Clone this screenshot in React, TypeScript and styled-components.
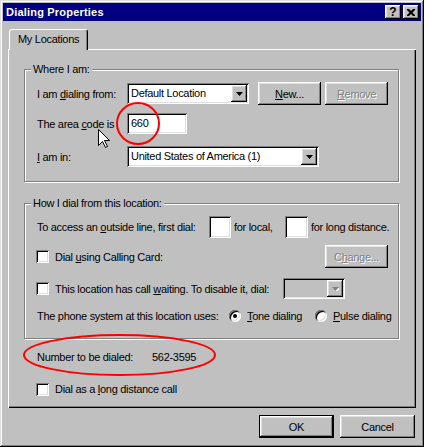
import styled, { createGlobalStyle } from "styled-components";

const GlobalStyle = createGlobalStyle`
  html, body {
    margin: 0;
    padding: 0;
    background: #c0c0c0;
  }
  body {
    font-family: "Liberation Sans", Arial, sans-serif;
    font-size: 11px;
    color: #000;
  }
`;

const raised =
  "box-shadow: inset -1px -1px #000, inset 1px 1px #fff, inset -2px -2px #808080, inset 2px 2px #dfdfdf;";
const sunken =
  "box-shadow: inset 1px 1px #808080, inset -1px -1px #fff, inset 2px 2px #000, inset -2px -2px #dfdfdf;";

const Window = styled.div`
  position: relative;
  width: 424px;
  height: 447px;
  box-sizing: border-box;
  padding: 3px;
  background: #c0c0c0;
  box-shadow: inset -1px -1px #000, inset 1px 1px #dfdfdf,
    inset -2px -2px #808080, inset 2px 2px #fff;
  display: flex;
  flex-direction: column;
  letter-spacing: -0.3px;
`;

const TitleBar = styled.div`
  height: 18px;
  background: #000080;
  display: flex;
  align-items: center;
  padding: 0 2px 0 3px;
`;

const TitleText = styled.div`
  flex: 1;
  color: #fff;
  font-weight: bold;
  letter-spacing: 0.2px;
`;

const TitleButtons = styled.div`
  display: flex;
  gap: 2px;
`;

const TitleButton = styled.div`
  width: 16px;
  height: 14px;
  background: #c0c0c0;
  ${raised}
  display: flex;
  align-items: center;
  justify-content: center;
  font-weight: bold;
  font-size: 12px;
  letter-spacing: 0;
  line-height: 14px;
`;

const Body = styled.div`
  padding: 8px 0 0 5px;
  display: flex;
  flex-direction: column;
`;

const TabStrip = styled.div`
  display: flex;
  height: 20px;
  padding-left: 1px;
`;

const Tab = styled.div`
  position: relative;
  z-index: 1;
  width: 79px;
  height: 21px;
  box-sizing: border-box;
  background: #c0c0c0;
  border-top: 1px solid #fff;
  border-left: 1px solid #fff;
  border-right: 1px solid #000;
  border-radius: 3px 3px 0 0;
  box-shadow: inset -1px 0 #808080;
  padding-left: 8px;
  line-height: 19px;
`;

const Panel = styled.div`
  width: 408px;
  height: 359px;
  box-sizing: border-box;
  padding: 20px 16px 0;
  box-shadow: inset 1px 1px #fff, inset -1px -1px #000, inset -2px -2px #808080;
  display: flex;
  flex-direction: column;
`;

const GroupBox = styled.div<{ $mt?: number }>`
  position: relative;
  margin: ${(p) => p.$mt ?? 0}px 1px 0 0;
  border: 1px solid #808080;
  box-shadow: 1px 1px 0 #fff, inset 1px 1px 0 #fff;
  padding: 12px 10px 14px 12px;
  display: flex;
  flex-direction: column;
`;

const Legend = styled.span`
  position: absolute;
  top: -7px;
  left: 6px;
  padding: 0 2px;
  background: #c0c0c0;
  line-height: 13px;
`;

const Row = styled.div<{ $h: number; $mt?: number }>`
  display: flex;
  align-items: center;
  height: ${(p) => p.$h}px;
  margin-top: ${(p) => p.$mt ?? 0}px;
`;

const Label = styled.span<{ $w?: number; $pl?: number }>`
  flex: none;
  width: ${(p) => (p.$w ? `${p.$w}px` : "auto")};
  padding-left: ${(p) => p.$pl ?? 0}px;
  box-sizing: border-box;
  white-space: nowrap;
`;

const Combo = styled.div<{ $w: number; $disabled?: boolean }>`
  flex: none;
  width: ${(p) => p.$w}px;
  height: 21px;
  box-sizing: border-box;
  padding: 2px;
  display: flex;
  background: ${(p) => (p.$disabled ? "#c0c0c0" : "#fff")};
  ${sunken}
`;

const ComboText = styled.span`
  flex: 1;
  padding-left: 2px;
  line-height: 17px;
  white-space: nowrap;
  overflow: hidden;
`;

const ComboArrow = styled.span`
  width: 16px;
  height: 17px;
  box-sizing: border-box;
  background: #c0c0c0;
  ${raised}
  display: flex;
  align-items: center;
  justify-content: center;
`;

const TextBox = styled.div<{ $w: number; $h?: number }>`
  flex: none;
  width: ${(p) => p.$w}px;
  height: ${(p) => p.$h ?? 21}px;
  box-sizing: border-box;
  background: #fff;
  ${sunken}
  padding-left: 4px;
  line-height: ${(p) => p.$h ?? 21}px;
`;

const Button = styled.div<{ $w: number; $disabled?: boolean; $default?: boolean; $ml?: number }>`
  flex: none;
  width: ${(p) => p.$w}px;
  height: 23px;
  box-sizing: border-box;
  margin-left: ${(p) => (p.$ml === undefined ? "0" : p.$ml < 0 ? "auto" : `${p.$ml}px`)};
  background: #c0c0c0;
  ${(p) =>
    p.$default
      ? "box-shadow: inset 0 0 0 1px #000, inset -2px -2px #000, inset 2px 2px #fff, inset -3px -3px #808080, inset 3px 3px #dfdfdf;"
      : raised}
  display: flex;
  align-items: center;
  justify-content: center;
  color: ${(p) => (p.$disabled ? "#808080" : "#000")};
  text-shadow: ${(p) => (p.$disabled ? "1px 1px 0 #fff" : "none")};
`;

const Check = styled.span`
  flex: none;
  width: 13px;
  height: 13px;
  box-sizing: border-box;
  background: #fff;
  ${sunken}
  margin: 0 6px 0 -1px;
`;

const Radio = styled.span<{ $on?: boolean }>`
  flex: none;
  position: relative;
  width: 12px;
  height: 12px;
  border-radius: 50%;
  background: #fff;
  box-shadow: inset 1px 1px #808080, inset -1px -1px #fff, inset 2px 2px #000,
    inset -2px -2px #dfdfdf;
  margin-right: 6px;
  &::after {
    content: "";
    display: ${(p) => (p.$on ? "block" : "none")};
    position: absolute;
    left: 4px;
    top: 4px;
    width: 4px;
    height: 4px;
    border-radius: 50%;
    background: #000;
  }
`;

const Indent = styled.div<{ $mt: number; $h: number }>`
  display: flex;
  align-items: center;
  height: ${(p) => p.$h}px;
  margin-top: ${(p) => p.$mt}px;
  padding-left: 13px;
`;

const Footer = styled.div`
  width: 407px;
  margin-top: 7px;
  display: flex;
  justify-content: flex-end;
  gap: 6px;
`;

const Overlay = styled.svg`
  position: absolute;
  left: 0;
  top: 0;
  pointer-events: none;
`;

function Arrow({ disabled }: { disabled?: boolean }) {
  return (
    <svg width="7" height="4" viewBox="0 0 7 4">
      {disabled && <polygon points="1,1 8,1 4.5,5" fill="#fff" />}
      <polygon points="0,0 7,0 3.5,4" fill={disabled ? "#808080" : "#000"} />
    </svg>
  );
}

function Dropdown({ w, text, disabled }: { w: number; text?: string; disabled?: boolean }) {
  return (
    <Combo $w={w} $disabled={disabled}>
      <ComboText>{text}</ComboText>
      <ComboArrow>
        <Arrow disabled={disabled} />
      </ComboArrow>
    </Combo>
  );
}

export default function App() {
  return (
    <>
      <GlobalStyle />
      <Window>
        <TitleBar>
          <TitleText>Dialing Properties</TitleText>
          <TitleButtons>
            <TitleButton>?</TitleButton>
            <TitleButton>
              <svg width="8" height="7" viewBox="0 0 8 7">
                <path d="M0 0h2l2 2 2-2h2v1l-2.5 2.5L8 6v1H6L4 5 2 7H0V6l2.5-2.5L0 1z" fill="#000" />
              </svg>
            </TitleButton>
          </TitleButtons>
        </TitleBar>

        <Body>
          <TabStrip>
            <Tab>My Locations</Tab>
          </TabStrip>
          <Panel>
            <GroupBox>
              <Legend>Where I am:</Legend>
              <Row $h={23}>
                <Label $w={90}>
                  I am <u>d</u>ialing from:
                </Label>
                <Dropdown w={122} text="Default Location" />
                <Button $w={63} $ml={9}>
                  <span>
                    <u>N</u>ew...
                  </span>
                </Button>
                <Button $w={63} $ml={4} $disabled>
                  <span>
                    <u>R</u>emove
                  </span>
                </Button>
              </Row>
              <Row $h={21} $mt={8}>
                <Label $w={90}>
                  The area <u>c</u>ode is
                </Label>
                <TextBox $w={60}>660</TextBox>
              </Row>
              <Row $h={21} $mt={12}>
                <Label $w={90}>
                  <u>I</u> am in:
                </Label>
                <Dropdown w={192} text="United States of America (1)" />
              </Row>
            </GroupBox>

            <GroupBox $mt={21}>
              <Legend>How I dial from this location:</Legend>
              <Row $h={22}>
                <Label $w={172}>
                  To access an <u>o</u>utside line, first dial:
                </Label>
                <TextBox $w={22} $h={22} />
                <Label $w={54} $pl={3}>
                  for local,
                </Label>
                <TextBox $w={23} $h={22} />
                <Label $pl={3}>for long distance.</Label>
              </Row>
              <Row $h={23} $mt={7}>
                <Check />
                <Label>
                  Dial <u>u</u>sing Calling Card:
                </Label>
                <Button $w={63} $ml={-1} $disabled>
                  <span>
                    C<u>h</u>ange...
                  </span>
                </Button>
              </Row>
              <Row $h={21} $mt={10}>
                <Check />
                <Label $w={228}>
                  This location has call <u>w</u>aiting. To disable it, dial:
                </Label>
                <Dropdown w={62} disabled />
              </Row>
              <Row $h={16} $mt={9}>
                <Label $w={192}>The phone system at this location uses:</Label>
                <Radio $on />
                <Label $w={68}>
                  <u>T</u>one dialing
                </Label>
                <Radio />
                <Label>
                  <u>P</u>ulse dialing
                </Label>
              </Row>
            </GroupBox>

            <Indent $mt={10} $h={16}>
              <Label $w={115}>Number to be dialed:</Label>
              <Label>562-3595</Label>
            </Indent>
            <Indent $mt={16} $h={16}>
              <Check />
              <Label>
                Dial as a <u>l</u>ong distance call
              </Label>
            </Indent>
          </Panel>

          <Footer>
            <Button $w={75} $default>
              OK
            </Button>
            <Button $w={75}>Cancel</Button>
          </Footer>
        </Body>

        <Overlay width="424" height="447" viewBox="0 0 424 447">
          <ellipse cx="138" cy="123.5" rx="21" ry="20.5" fill="none" stroke="#f00" strokeWidth="2" />
          <ellipse cx="119.5" cy="355" rx="95.5" ry="20" fill="none" stroke="#f00" strokeWidth="2" />
          <path
            d="M98.5 129.5V145.5L102.5 141.5L105.5 147.5L107.5 146.5L104.5 140.5H109.5Z"
            fill="#fff"
            stroke="#000"
            strokeWidth="1"
          />
        </Overlay>
      </Window>
    </>
  );
}
